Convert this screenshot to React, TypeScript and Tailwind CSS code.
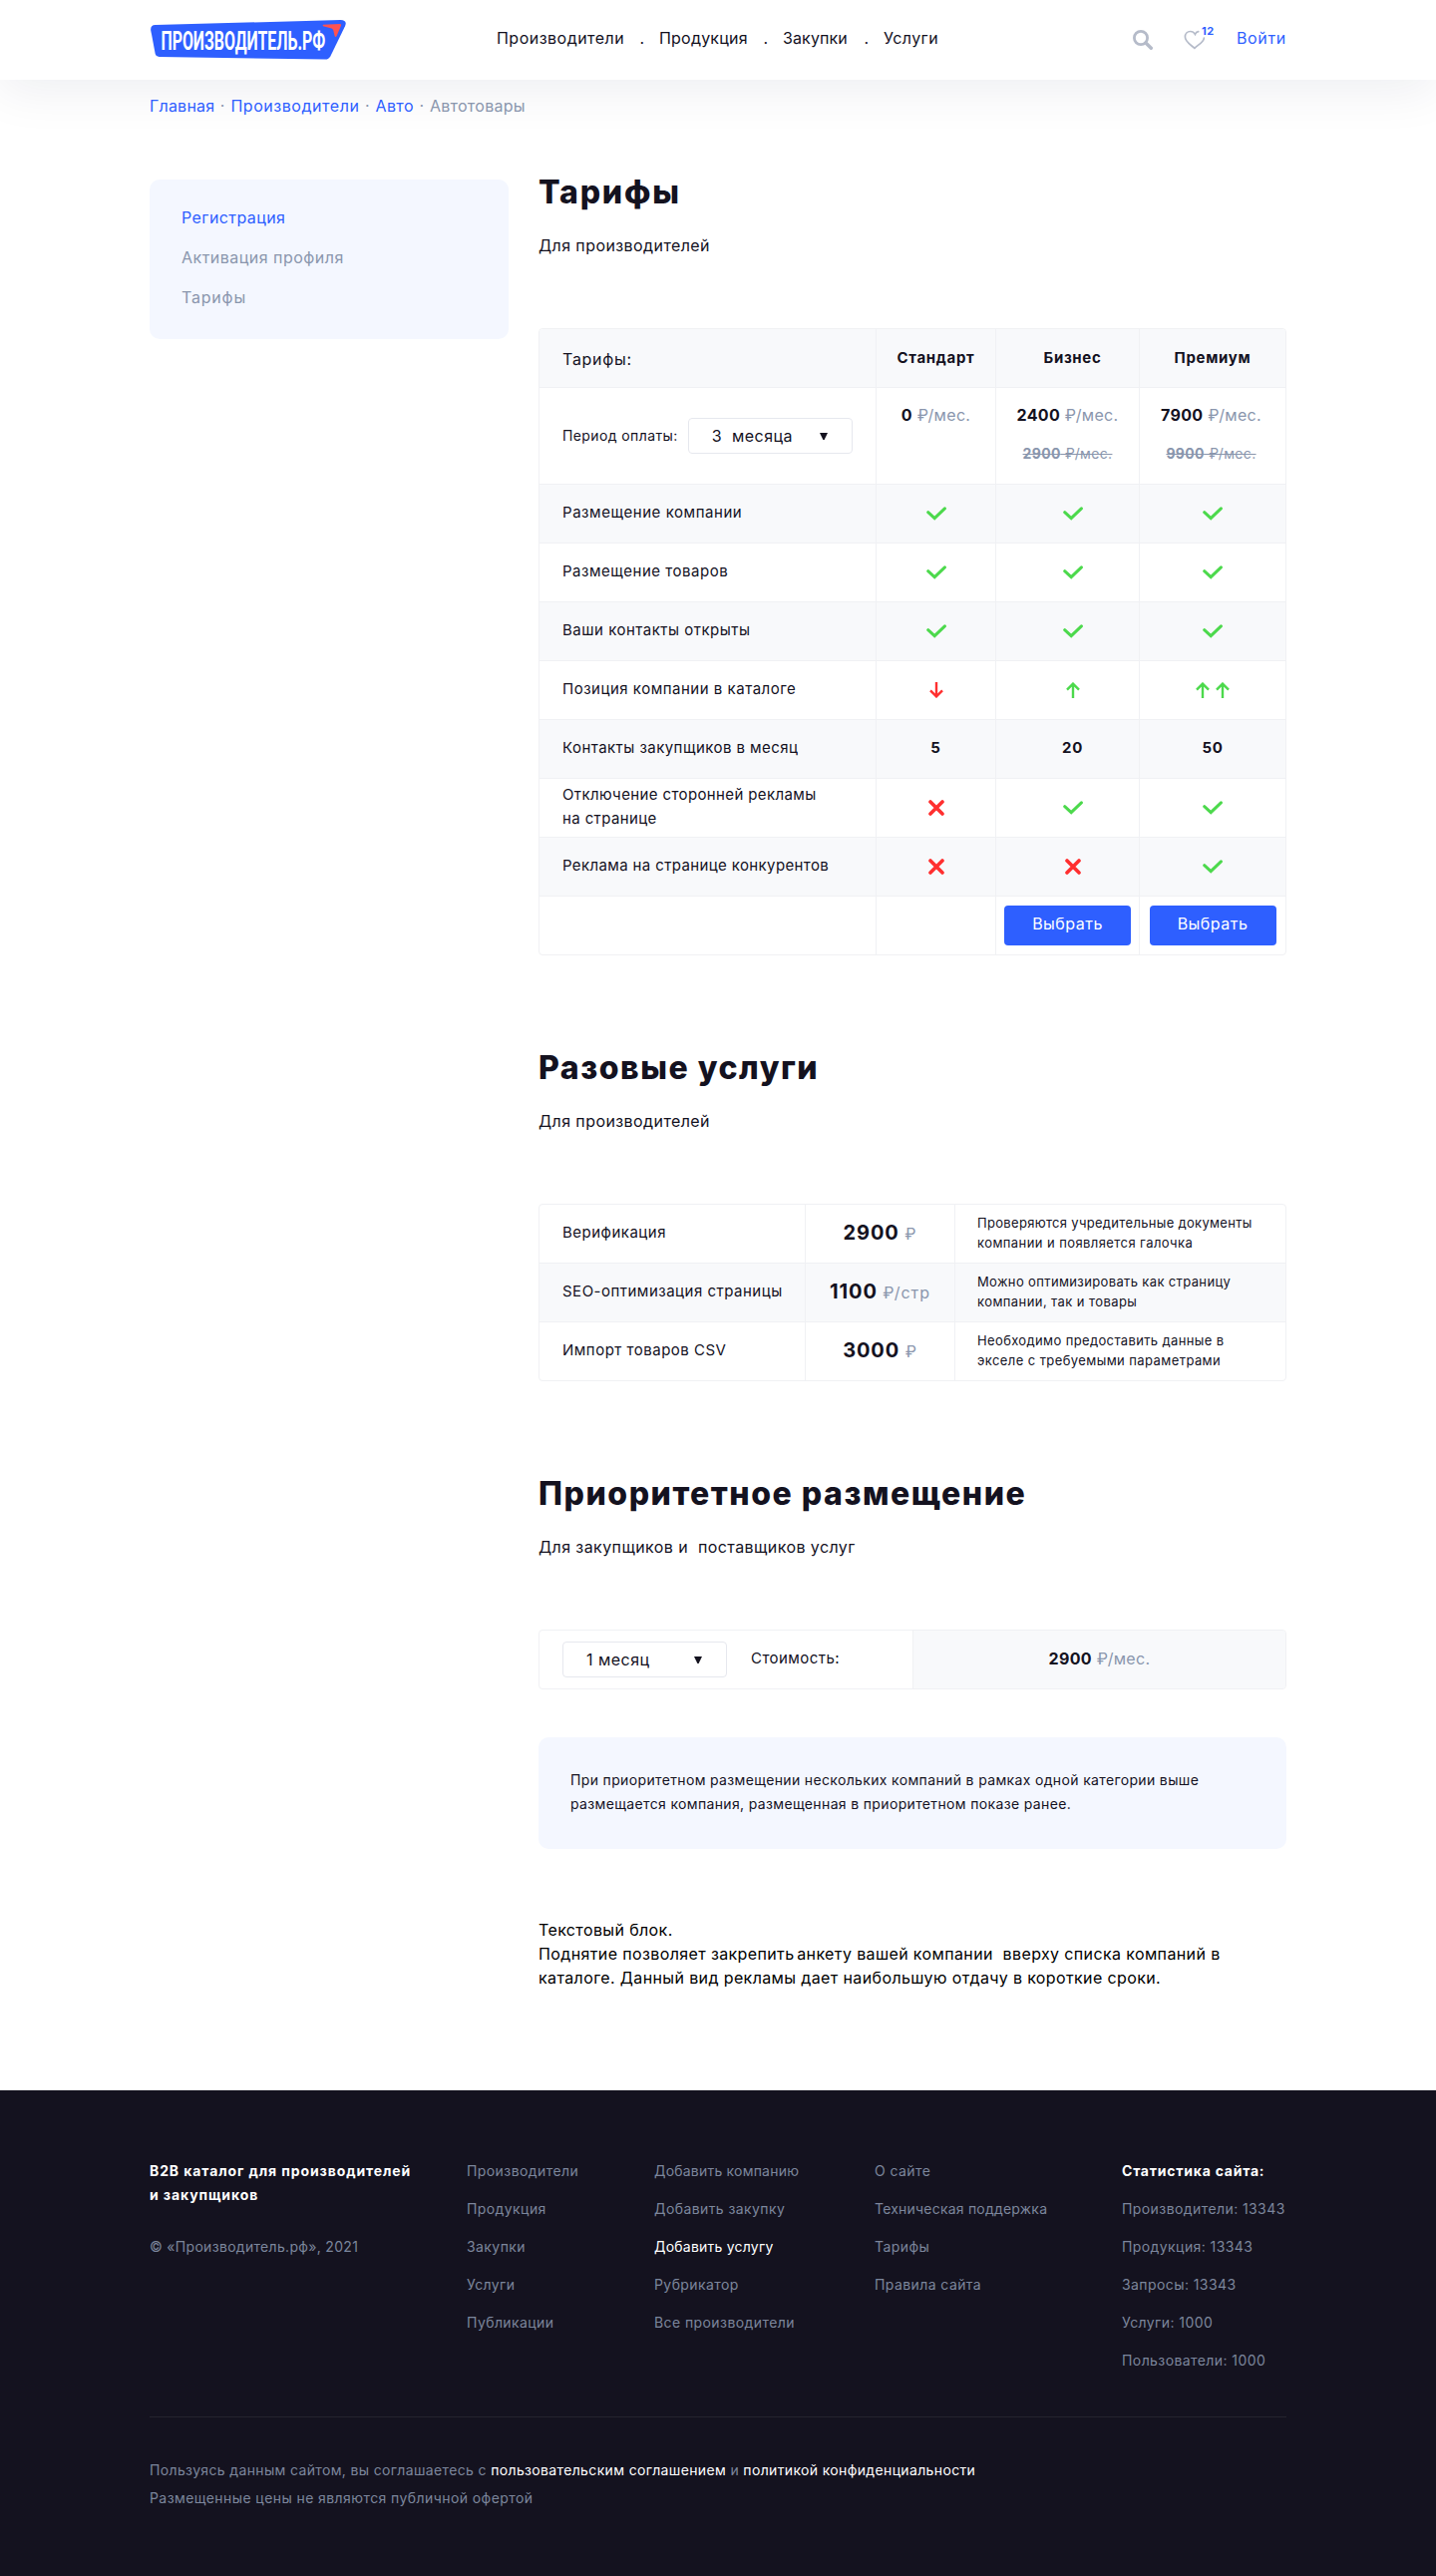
import type { ReactNode } from "react";

function Logo() {
  return (
    <svg width="196" height="40" viewBox="0 0 196 40" role="img" aria-label="Производитель.рф" className="shrink-0 overflow-visible">
      <path
        d="M4.6 5 L190.5 0.1 Q197.6 0.2 195 6.3 L180.3 36.5 Q178.6 39.6 175.3 39.6 L8.6 37 Q5.3 36.8 4.6 33.6 L0.2 10.2 Q-0.3 5.3 4.6 5Z"
        fill="#2e5fff"
      />
      <path d="M173 4.8 L190 3.9 Q191.8 3.9 191 5.8 L186.6 16 Q185.5 17.8 184.6 16 L183.3 10.6 Q182.8 9.3 181.6 8.6 L173 6.2 Q172.2 5.2 173 4.8Z" fill="#ff5252" />
      <text
        transform="translate(10.4 30.3) scale(0.637 1)"
        fill="#fff"
        className="font-['Roboto',sans-serif] text-[25px] font-bold tracking-normal"
      >
        ПРОИЗВОДИТЕЛЬ.РФ
      </text>
    </svg>
  );
}

function SearchIcon() {
  return (
    <svg width="20" height="20" viewBox="0 0 20 20" fill="none" stroke="#b5bbc9" strokeWidth="2.8" className="shrink-0">
      <circle cx="8" cy="8" r="6.6" />
      <path d="M13 13 L18.3 18.3" strokeWidth="3.4" strokeLinecap="round" />
    </svg>
  );
}

function HeartIcon() {
  return (
    <svg width="22" height="20" viewBox="0 0 22 20" fill="none" stroke="#b5bbc9" strokeWidth="1.7" strokeLinecap="round">
      <path d="M14.7 1.7 C13 2 11.9 3.2 11.4 4.4 C10.4 2.6 8.6 1.5 6.6 1.5 C3.6 1.5 1.4 3.9 1.4 7 C1.4 11.8 6.5 14.4 10.9 18.4 C15 14.5 20.2 12 20.3 8.2" />
    </svg>
  );
}

function Check() {
  return (
    <svg width="20" height="14" viewBox="0 0 20 14" fill="none" stroke="#4cd94c" strokeWidth="3" strokeLinecap="round">
      <path d="M1.7 5.7 L8.2 11.6 L18.4 1.9" />
    </svg>
  );
}

function Cross() {
  return (
    <svg width="16" height="16" viewBox="0 0 16 16" stroke="#ff2f2f" strokeWidth="3.6" strokeLinecap="round">
      <path d="M2 2 L14 14 M14 2 L2 14" />
    </svg>
  );
}

function Arrow({ down = false }: { down?: boolean }) {
  return (
    <svg
      width="14"
      height="16"
      viewBox="0 0 14 16"
      fill="none"
      strokeWidth="2.4"
      className={down ? "rotate-180 stroke-[#ff2f2f]" : "stroke-[#4cd94c]"}
    >
      <path d="M7 16 V1.8 M1 7.6 L7 1.6 L13 7.6" />
    </svg>
  );
}

function Select({ value }: { value: string }) {
  return (
    <button className="flex h-9 w-[165px] shrink-0 items-center justify-between rounded-[4px] border border-[#e6e8ee] bg-white pr-6 pl-[23px] text-base tracking-[0.03em]">
      <span className="whitespace-pre">{value}</span>
      <svg width="8" height="7" viewBox="0 0 8 7" fill="#14121f">
        <path d="M0 0 H8 L4.6 7 H3.4Z" />
      </svg>
    </button>
  );
}

function Price({ value, unit = "₽/мес." }: { value: string; unit?: string }) {
  return (
    <span className="text-base leading-6 tracking-[0.02em] whitespace-nowrap">
      <b>{value}</b> <span className="text-[#8a96ad]">{unit}</span>
    </span>
  );
}

function OldPrice({ value }: { value: string }) {
  return (
    <span className="text-sm leading-6 tracking-[0.025em] whitespace-nowrap text-[#8a96ad] line-through">
      <b>{value}</b> ₽/мес.
    </span>
  );
}

function Section({ title, sub, children }: { title: ReactNode; sub: string; children: ReactNode }) {
  return (
    <section>
      <h2 className="text-[32px] leading-10 font-extrabold">{title}</h2>
      <p className="mt-[21px] text-base leading-6 whitespace-pre">{sub}</p>
      <div className="mt-[71px]">{children}</div>
    </section>
  );
}

const up = <Arrow />;
const rows: { label: ReactNode; cells: [ReactNode, ReactNode, ReactNode] }[] = [
  { label: <span className="tracking-[0.037em]">Размещение компании</span>, cells: [<Check />, <Check />, <Check />] },
  { label: <span className="tracking-[0.035em]">Размещение товаров</span>, cells: [<Check />, <Check />, <Check />] },
  { label: <span className="tracking-[0.033em]">Ваши контакты открыты</span>, cells: [<Check />, <Check />, <Check />] },
  {
    label: <span className="tracking-[0.034em]">Позиция компании в каталоге</span>,
    cells: [<Arrow down />, up, <span className="flex gap-[6px]">{up}{up}</span>],
  },
  { label: <span className="tracking-[0.03em]">Контакты закупщиков в месяц</span>, cells: ["5", "20", "50"] },
  {
    label: (
      <>
        Отключение сторонней рекламы
        <br />
        на странице
      </>
    ),
    cells: [<Cross />, <Check />, <Check />],
  },
  { label: "Реклама на странице конкурентов", cells: [<Cross />, <Cross />, <Check />] },
];

const grid = "grid grid-cols-[338px_120px_144px_146px]";
const line = "border-r border-[#f0f1f4]";

function Mark({ children, className }: { children: ReactNode; className: string }) {
  const isText = typeof children === "string";
  return (
    <div className={`flex items-center justify-center text-[15px] font-bold ${className} ${isText ? "pb-px tracking-[0.05em]" : ""}`}>
      {children}
    </div>
  );
}

function TariffTable() {
  return (
    <div className="overflow-hidden rounded-[4px] border border-[#f0f1f4]">
      <div className={`${grid} h-[59px] border-b border-[#f0f1f4] bg-[#f8f9fb]`}>
        <div className={`${line} flex items-center pt-[2px] pl-[23px] tracking-[0.045em]`}>Тарифы:</div>
        <div className={`${line} flex items-center justify-center text-[15px] font-bold tracking-[0.045em]`}>Стандарт</div>
        <div className={`${line} flex items-center justify-center pl-[10px] text-[15px] font-bold tracking-[0.045em]`}>Бизнес</div>
        <div className="flex items-center justify-center text-[15px] font-bold tracking-[0.045em]">Премиум</div>
      </div>
      <div className={`${grid} h-[97px] border-b border-[#f0f1f4]`}>
        <div className={`${line} flex items-center gap-[10px] pl-[23px]`}>
          <span className="text-sm tracking-[0.028em]">Период оплаты:</span>
          <Select value="3  месяца" />
        </div>
        <div className={`${line} flex flex-col items-center pt-[15px]`}>
          <Price value="0" />
        </div>
        <div className={`${line} flex flex-col items-center gap-[15px] pt-[15px]`}>
          <Price value="2400" />
          <OldPrice value="2900" />
        </div>
        <div className="flex flex-col items-center gap-[15px] pt-[15px] pr-[3px]">
          <Price value="7900" />
          <OldPrice value="9900" />
        </div>
      </div>
      {rows.map((r, i) => (
        <div key={i} className={`${grid} h-[59px] border-b border-[#f0f1f4] ${i % 2 === 0 ? "bg-[#f8f9fb]" : ""}`}>
          <div className={`${line} flex items-center pb-[2px] pl-[23px] text-[15px] leading-6 tracking-[0.025em]`}>
            <span>{r.label}</span>
          </div>
          <Mark className={line}>{r.cells[0]}</Mark>
          <Mark className={`${line} pl-[10px]`}>{r.cells[1]}</Mark>
          <Mark className="">{r.cells[2]}</Mark>
        </div>
      ))}
      <div className={`${grid} h-[58px]`}>
        <div className={line} />
        <div className={line} />
        <div className={`${line} flex items-center justify-center`}>
          <Choose />
        </div>
        <div className="flex items-center justify-center">
          <Choose />
        </div>
      </div>
    </div>
  );
}

function Choose() {
  return (
    <button className="h-10 w-[127px] rounded-[4px] bg-[#2e5fff] pb-1 text-base leading-6 tracking-[0.03em] text-white">
      Выбрать
    </button>
  );
}

const services = [
  { name: "Верификация", price: "2900", unit: "₽", note: ["Проверяются учредительные документы", "компании и появляется галочка"] },
  { name: "SEO-оптимизация страницы", price: "1100", unit: "₽/стр", note: ["Можно оптимизировать как страницу", "компании, так и товары"] },
  { name: "Импорт товаров CSV", price: "3000", unit: "₽", note: ["Необходимо предоставить данные в", "экселе с требуемыми параметрами"] },
];

function ServiceTable() {
  return (
    <div className="divide-y divide-[#f0f1f4] overflow-hidden rounded-[4px] border border-[#f0f1f4]">
      {services.map((s, i) => (
        <div key={s.name} className={`grid grid-cols-[267px_150px_331px] ${i === 2 ? "h-[58px]" : "h-[59px]"} ${i === 1 ? "bg-[#f8f9fb]" : ""}`}>
          <div className={`${line} flex items-center pb-px pl-[23px] text-[15px] tracking-[0.033em]`}>{s.name}</div>
          <div className={`${line} flex items-center justify-center pb-[2px]`}>
            <span className="tracking-[0.06em]">
              <b className="text-xl tracking-[0.045em]">{s.price}</b> <span className="text-[#8a96ad]">{s.unit}</span>
            </span>
          </div>
          <div className="flex items-center pb-[2px] pl-[22px] text-[13px] leading-5">
            <span>
              <span className={i === 0 ? "tracking-[0.024em]" : "tracking-[0.028em]"}>{s.note[0]}</span>
              <br />
              {s.note[1]}
            </span>
          </div>
        </div>
      ))}
    </div>
  );
}

const footerCols: { x: string; items: string[] }[] = [
  { x: "w-[188px]", items: ["Производители", "Продукция", "Закупки", "Услуги", "Публикации"] },
  { x: "w-[221px]", items: ["Добавить компанию", "Добавить закупку", "Добавить услугу", "Рубрикатор", "Все производители"] },
  { x: "w-[248px]", items: ["О сайте", "Техническая поддержка", "Тарифы", "Правила сайта"] },
  {
    x: "w-[165px]",
    items: ["Статистика сайта:", "Производители: 13343", "Продукция: 13343", "Запросы: 13343", "Услуги: 1000", "Пользователи: 1000"],
  },
];

function footerItemClass(item: string) {
  if (item === "Статистика сайта:") return "font-bold tracking-[0.055em] text-white";
  if (item === "Добавить услугу") return "tracking-[0.016em] text-white";
  if (item === "Техническая поддержка" || item === "Добавить компанию") return "tracking-[0.015em]";
  return "";
}

function Sep() {
  return <span className="inline-block w-4 text-center text-[#8a96ad]">·</span>;
}

export default function App() {
  return (
    <div className="min-h-[2583px] bg-white font-['Inter',sans-serif] text-base tracking-[0.026em] text-[#14121f]">
      <header className="h-20 bg-white shadow-[0_10px_50px_rgba(20,30,70,0.075)]">
        <div className="mx-auto flex h-20 w-[1140px] items-center">
          <a className="ml-px">
            <Logo />
          </a>
          <nav className="ml-[151px] flex w-[638px] shrink-0 pb-1 leading-6">
            <span className="w-[129px] tracking-[0.03em]">Производители</span>
            <span className="w-[34px] text-center">.</span>
            <span className="w-[90px] tracking-[0.013em]">Продукция</span>
            <span className="w-[34px] text-center">.</span>
            <span className="w-[67px] tracking-[0.007em]">Закупки</span>
            <span className="w-[34px] text-center">.</span>
            <span>Услуги</span>
          </nav>
          <SearchIcon />
          <div className="relative ml-[31px]">
            <HeartIcon />
            <span className="absolute -top-[5px] left-[18px] text-[11px] leading-3 font-bold tracking-[0.04em] text-[#2e5fff]">12</span>
          </div>
          <a className="ml-[31px] pb-1 leading-6 tracking-[0.04em] text-[#2e5fff]">Войти</a>
        </div>
      </header>

      <main className="mx-auto w-[1140px]">
        <div className="pt-[14px] leading-6 text-[#2e5fff]">
          <span className="tracking-[0.014em]">Главная</span>
          <Sep />
          <span className="tracking-[0.034em]">Производители</span>
          <Sep />
          <span>Авто</span>
          <Sep />
          <span className="tracking-[0.016em] text-[#8a96ad]">Автотовары</span>
        </div>

        <div className="mt-[55px] flex items-start gap-[30px]">
          <aside className="mt-[7px] h-40 w-[360px] rounded-[10px] bg-[#f4f7ff] px-8 pt-[18px] leading-10 text-[#8a96ad]">
            <div className="text-[#2e5fff]">Регистрация</div>
            <div className="tracking-[0.03em]">Активация профиля</div>
            <div className="tracking-[0.05em]">Тарифы</div>
          </aside>

          <div className="w-[750px]">
            <Section title={<span className="tracking-[0.055em]">Тарифы</span>} sub="Для производителей">
              <TariffTable />
            </Section>

            <div className="mt-[93px]">
              <Section title={<span className="tracking-[0.048em]">Разовые услуги</span>} sub="Для производителей">
                <ServiceTable />
              </Section>
            </div>

            <div className="mt-[93px]">
              <Section
                title={<span className="tracking-[0.048em]">Приоритетное размещение</span>}
                sub="Для закупщиков и  поставщиков услуг"
              >
                <div className="grid h-[60px] grid-cols-[375px_373px] overflow-hidden rounded-[4px] border border-[#f0f1f4]">
                  <div className={`${line} flex items-center gap-6 pl-[23px] text-[15px] tracking-[0.03em]`}>
                    <Select value="1 месяц" />
                    <span className="pb-px">Стоимость:</span>
                  </div>
                  <div className="flex items-center justify-center bg-[#f8f9fb] pb-[3px]">
                    <Price value="2900" />
                  </div>
                </div>
              </Section>
            </div>

            <div className="mt-12 h-28 rounded-[10px] bg-[#f4f7ff] px-8 pt-[31px] text-sm leading-6 tracking-[0.025em] whitespace-nowrap">
              При приоритетном размещении нескольких компаний в рамках одной категории выше
              <br />
              размещается компания, размещенная в приоритетном показе ранее.
            </div>

            <p className="mt-[69px] leading-6 tracking-[0.0235em] whitespace-pre text-black">
              Текстовый блок.
              <br />
              Поднятие позволяет закрепить<span className="tracking-[-0.11em]"> </span>
              {"анкету вашей компании  вверху списка компаний в"}
              <br />
              каталоге. Данный вид рекламы дает наибольшую отдачу в короткие сроки.
            </p>
          </div>
        </div>
      </main>

      <footer className="mt-[101px] h-[487px] bg-[#14121f] text-sm leading-6 text-[#7c869c]">
        <div className="mx-auto w-[1140px] pt-[69px]">
          <div className="flex h-[214px]">
            <div className="w-[318px] shrink-0">
              <div className="font-bold tracking-[0.064em] text-white">
                B2B каталог для производителей
                <br />и закупщиков
              </div>
              <div className="mt-7 tracking-[0.022em]">© «Производитель.рф», 2021</div>
            </div>
            {footerCols.map((c) => (
              <ul key={c.items[0]} className={`${c.x} flex shrink-0 flex-col gap-[14px] whitespace-nowrap`}>
                {c.items.map((t) => (
                  <li key={t} className={footerItemClass(t)}>
                    {t}
                  </li>
                ))}
              </ul>
            ))}
          </div>
          <div className="mt-11 border-t border-[#25242f] pt-[39px] leading-7">
            <div className="tracking-[0.0252em]">
              Пользуясь данным сайтом, вы соглашаетесь с <span className="text-white">пользовательским соглашением</span> и{" "}
              <span className="text-white">политикой конфиденциальности</span>
            </div>
            <div>Размещенные цены не являются публичной офертой</div>
          </div>
        </div>
      </footer>
    </div>
  );
}
